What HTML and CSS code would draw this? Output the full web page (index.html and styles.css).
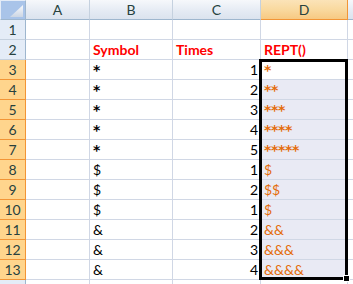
FILE: index.html
```html
<!DOCTYPE html>
<html lang="en">
<head>
    <meta charset="UTF-8">
    <title>REPT</title>
    <link rel="stylesheet" href="styles.css">
</head>
<body>
    <div class="sheet">
        <div class="grid">
            <!-- header row -->
            <div class="corner"><span class="tri"></span></div>
            <div class="col-head">A</div>
            <div class="col-head">B</div>
            <div class="col-head">C</div>
            <div class="col-head sel">D</div>
            <div class="col-head"></div>

            <div class="row-head">1</div>
            <div class="cell"></div><div class="cell"></div><div class="cell"></div><div class="cell"></div><div class="cell"></div>

            <div class="row-head">2</div>
            <div class="cell"></div>
            <div class="cell title">Symbol</div>
            <div class="cell title">Times</div>
            <div class="cell title">REPT()</div>
            <div class="cell"></div>

            <div class="row-head sel">3</div>
            <div class="cell"></div><div class="cell star">*</div><div class="cell num">1</div><div class="cell out star active">*</div><div class="cell"></div>

            <div class="row-head sel">4</div>
            <div class="cell"></div><div class="cell star">*</div><div class="cell num">2</div><div class="cell out star">**</div><div class="cell"></div>

            <div class="row-head sel">5</div>
            <div class="cell"></div><div class="cell star">*</div><div class="cell num">3</div><div class="cell out star">***</div><div class="cell"></div>

            <div class="row-head sel">6</div>
            <div class="cell"></div><div class="cell star">*</div><div class="cell num">4</div><div class="cell out star">****</div><div class="cell"></div>

            <div class="row-head sel">7</div>
            <div class="cell"></div><div class="cell star">*</div><div class="cell num">5</div><div class="cell out star">*****</div><div class="cell"></div>

            <div class="row-head sel">8</div>
            <div class="cell"></div><div class="cell">$</div><div class="cell num">1</div><div class="cell out">$</div><div class="cell"></div>

            <div class="row-head sel">9</div>
            <div class="cell"></div><div class="cell">$</div><div class="cell num">2</div><div class="cell out">$$</div><div class="cell"></div>

            <div class="row-head sel">10</div>
            <div class="cell"></div><div class="cell">$</div><div class="cell num">1</div><div class="cell out">$</div><div class="cell"></div>

            <div class="row-head sel">11</div>
            <div class="cell"></div><div class="cell">&amp;</div><div class="cell num">2</div><div class="cell out">&amp;&amp;</div><div class="cell"></div>

            <div class="row-head sel">12</div>
            <div class="cell"></div><div class="cell">&amp;</div><div class="cell num">3</div><div class="cell out">&amp;&amp;&amp;</div><div class="cell"></div>

            <div class="row-head sel">13</div>
            <div class="cell"></div><div class="cell">&amp;</div><div class="cell num">4</div><div class="cell out">&amp;&amp;&amp;&amp;</div><div class="cell"></div>

            <div class="row-head"></div>
            <div class="cell"></div><div class="cell"></div><div class="cell"></div><div class="cell"></div><div class="cell"></div>
        </div>

        <!-- selection outline D3:D13 -->
        <div class="selection"><span class="handle"></span></div>
    </div>
</body>
</html>
```

FILE: styles.css
```css
body {
    margin: 0;
    background: #ffffff;
    font-family: "Lato", "Liberation Sans", sans-serif;
    overflow: hidden;
}
.sheet {
    position: relative;
    width: 353px;
    height: 284px;
    overflow: hidden;
}
.grid {
    display: grid;
    grid-template-columns: 26px 64px 83px 88px 87px 40px;
    grid-auto-rows: 20px;
}
.grid > div {
    box-sizing: border-box;
    border-right: 1px solid #d0d7e5;
    border-bottom: 1px solid #d0d7e5;
    font-size: 14px;
    white-space: nowrap;
    overflow: hidden;
}
.corner {
    position: relative;
    background: #a9c4e9;
    border: 1px solid #e4ecf7;
    border-right-color: #9eb6ce !important;
    border-bottom-color: #9eb6ce !important;
}
.corner .tri {
    position: absolute;
    right: 2px;
    bottom: 2px;
    width: 13px;
    height: 12px;
    background: linear-gradient(to bottom, #f7f9fc, #ccd6e4);
    clip-path: polygon(100% 0, 100% 100%, 0 100%);
}
.col-head {
    display: flex;
    align-items: center;
    justify-content: center;
    background: linear-gradient(to bottom, #f6f8fb, #e4eaf3 60%, #dbe3ee);
    color: #27413e;
    border-right-color: #c5d1df !important;
    border-bottom-color: #9eb6ce !important;
}
.col-head.sel {
    background: linear-gradient(to bottom, #fbe3b8, #f9d99f 50%, #f7c982);
    border-right-color: #f29536 !important;
    border-bottom-color: #f29536 !important;
}
.row-head {
    display: flex;
    align-items: center;
    justify-content: center;
    background: #e4ecf7;
    color: #27413e;
    border-right-color: #9eb6ce !important;
    border-bottom-color: #c5d1df !important;
}
.row-head.sel {
    background: #ffd58d;
    border-right-color: #f29536 !important;
    border-bottom-color: #f29536 !important;
}
.cell {
    display: flex;
    align-items: flex-end;
    padding: 0 2px 1px 3px;
    color: #000000;
}
.star {
    font-family: "DejaVu Sans", sans-serif;
    font-weight: bold;
    letter-spacing: -0.3px;
}
.num {
    justify-content: flex-end;
}
.title {
    color: #ff0000;
    font-weight: bold;
}
.out {
    color: #e46c0a;
    background: #e9eaf4;
}
.out.active {
    background: #ffffff;
}
.selection {
    position: absolute;
    left: 259px;
    top: 59px;
    width: 89px;
    height: 221px;
    box-sizing: border-box;
    border: 3px solid #000000;
}
.handle {
    position: absolute;
    right: -5px;
    bottom: -5px;
    width: 5px;
    height: 5px;
    background: #000000;
    border: 1px solid #ffffff;
}
```
